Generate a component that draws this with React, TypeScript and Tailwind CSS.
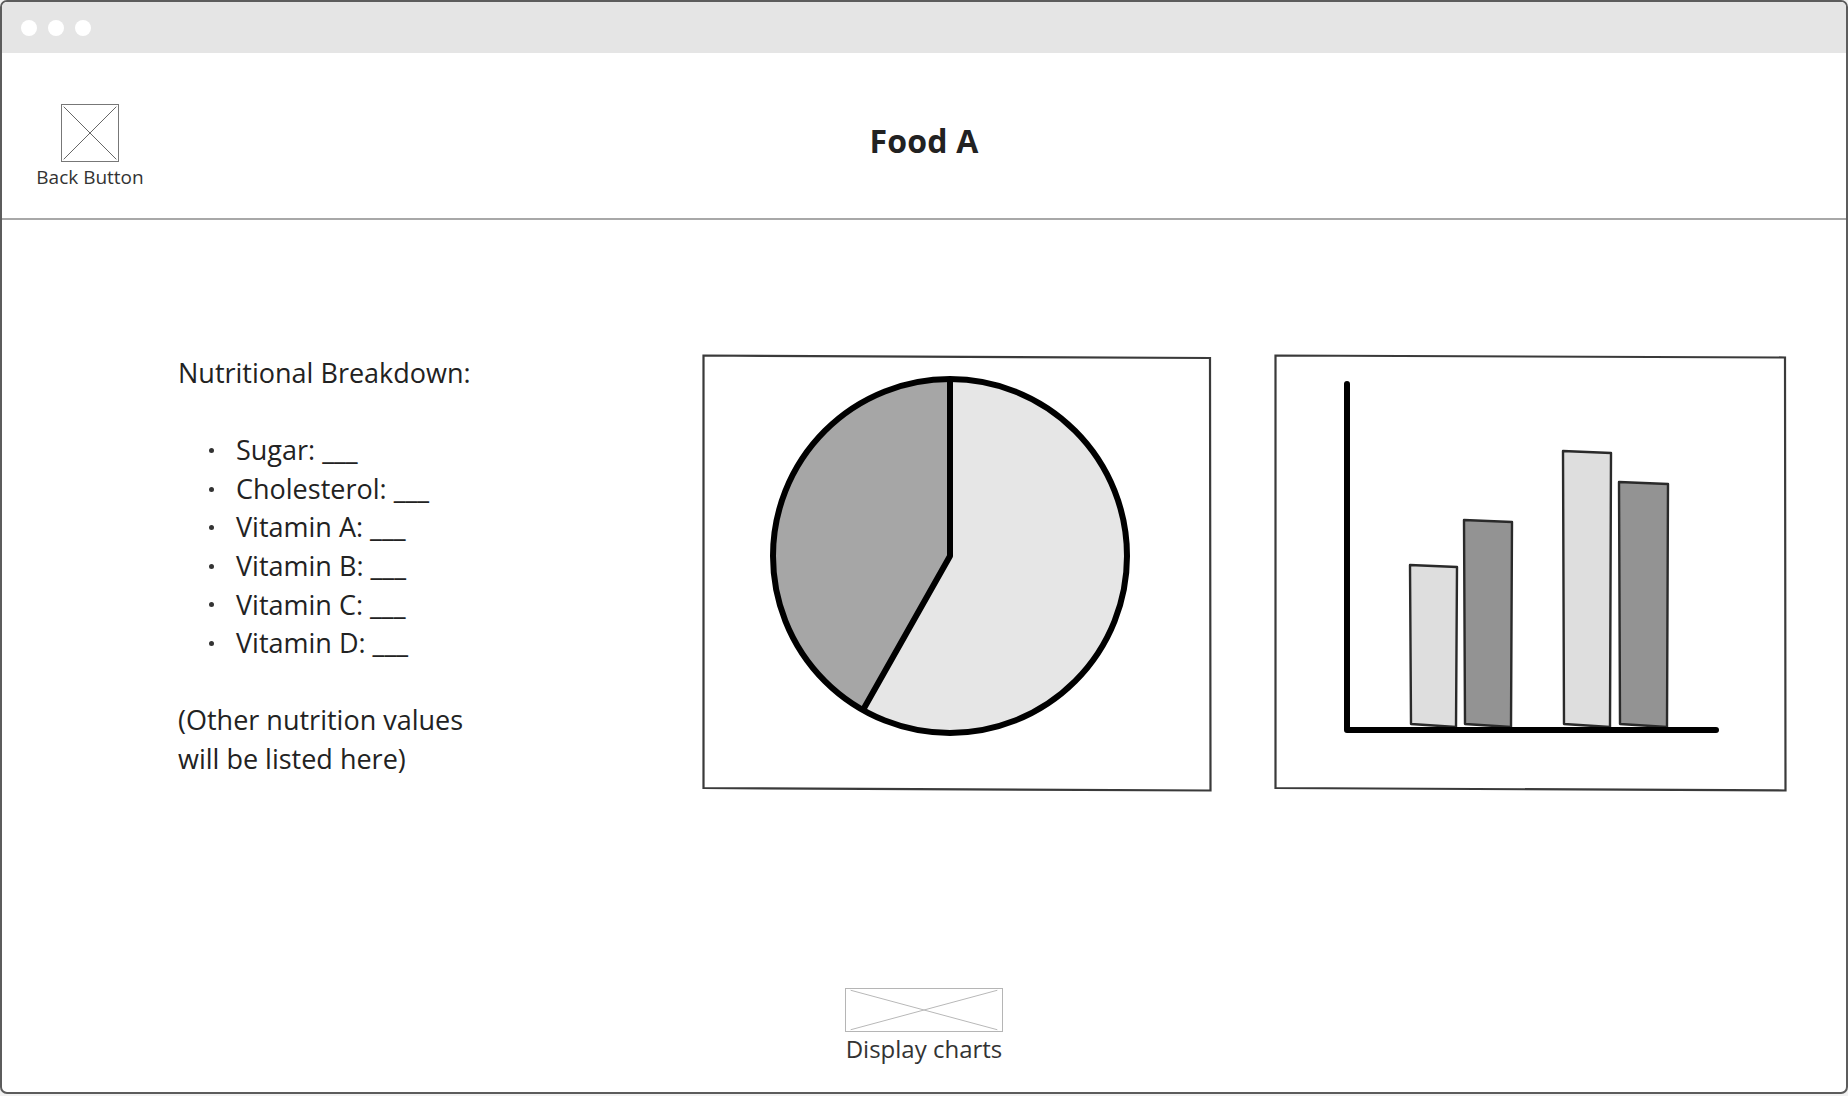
import React from "react";

const nutrients = ["Sugar", "Cholesterol", "Vitamin A", "Vitamin B", "Vitamin C", "Vitamin D"];

// placeholder image box with an X across it
function PlaceholderBox({ className, stroke }: { className: string; stroke: string }) {
  return (
    <div className={className}>
      <svg className="h-full w-full" viewBox="0 0 100 100" preserveAspectRatio="none">
        <line x1="3" y1="3" x2="97" y2="97" stroke={stroke} strokeWidth="1" vectorEffect="non-scaling-stroke" />
        <line x1="97" y1="3" x2="3" y2="97" stroke={stroke} strokeWidth="1" vectorEffect="non-scaling-stroke" />
      </svg>
    </div>
  );
}

function PieSketch() {
  return (
    <svg width="510" height="438" viewBox="0 0 510 438">
      {/* hand drawn frame */}
      <path d="M1.5 1.5 L508 4 L508.5 436.5 L1.5 434 Z" fill="#fff" stroke="#3a3a3a" strokeWidth="2.2" />
      <path d="M248 202 L248 25 A177 177 0 1 1 161 356 Z" fill="#e6e6e6" />
      <path d="M248 202 L248 25 A177 177 0 0 0 161 356 Z" fill="#a6a6a6" />
      <circle cx="248" cy="202" r="177" fill="none" stroke="#000" strokeWidth="6" />
      <path d="M248 25 L248 202 L161 356" fill="none" stroke="#000" strokeWidth="6" strokeLinejoin="round" />
    </svg>
  );
}

function BarSketch() {
  const bars = [
    { x1: 136, x2: 183, top: 211, fill: "#dedede" },
    { x1: 190, x2: 238, top: 166, fill: "#939393" },
    { x1: 289, x2: 337, top: 97, fill: "#dedede" },
    { x1: 345, x2: 394, top: 128, fill: "#939393" },
  ];
  return (
    <svg width="513" height="438" viewBox="0 0 513 438">
      <path d="M1.5 1.5 L511 3.5 L511.5 436.5 L1.5 434 Z" fill="#fff" stroke="#3a3a3a" strokeWidth="2.2" />
      {bars.map((b) => (
        <path
          key={b.x1}
          d={`M${b.x1} ${b.top} L${b.x2} ${b.top + 2} L${b.x2 - 1} 373 L${b.x1 + 1} 370 Z`}
          fill={b.fill}
          stroke="#2a2a2a"
          strokeWidth="2.4"
          strokeLinejoin="round"
        />
      ))}
      <path d="M73 30 L73 376 L442 376" fill="none" stroke="#000" strokeWidth="6" strokeLinecap="round" strokeLinejoin="round" />
    </svg>
  );
}

export default function App() {
  return (
    <div className="h-[1096px] w-full bg-[#f2f2f2] text-[#222]" style={{ fontFamily: '"Open Sans", "Liberation Sans", sans-serif' }}>
      <div className="flex h-[1094px] flex-col overflow-hidden rounded-[7px] border-2 border-[#5c5c5c] bg-white">
        {/* window chrome */}
        <div className="flex h-[51px] shrink-0 items-center gap-[11px] bg-[#e5e5e5] pl-[19px]">
          <span className="h-4 w-4 rounded-full bg-white" />
          <span className="h-4 w-4 rounded-full bg-white" />
          <span className="h-4 w-4 rounded-full bg-white" />
        </div>

        {/* header */}
        <header className="grid h-[167px] shrink-0 grid-cols-[1fr_auto_1fr] items-center border-b-2 border-[#a8a8a8]">
          <div className="flex flex-col items-start pl-[27px] pt-[22px]">
            <div className="flex w-[122px] flex-col items-center">
              <PlaceholderBox className="h-[58px] w-[58px] border border-[#777]" stroke="#666" />
              <span className="mt-[2px] text-[19px] leading-[26px] text-[#333]">Back Button</span>
            </div>
          </div>
          <h1 className="pt-[10px] text-[32px] font-bold leading-none tracking-[0.2px]">Food A</h1>
          <div />
        </header>

        {/* body */}
        <main className="flex flex-1 flex-col">
          <div className="flex items-start pl-[176px] pt-[134px]">
            <div className="w-[524px] text-[27px] leading-[38.6px]">
              <p>Nutritional Breakdown:</p>
              <p>&nbsp;</p>
              <ul>
                {nutrients.map((n) => (
                  <li key={n} className="flex items-center">
                    <span className="ml-[31px] mr-[22px] h-[5px] w-[5px] rounded-full bg-[#333]" />
                    <span>{n}: ___</span>
                  </li>
                ))}
              </ul>
              <p>&nbsp;</p>
              <p>(Other nutrition values</p>
              <p>will be listed here)</p>
            </div>
            <div className="flex gap-[62px]">
              <PieSketch />
              <BarSketch />
            </div>
          </div>

          <div className="mt-auto flex flex-col items-center pb-[27px]">
            <PlaceholderBox className="h-[44px] w-[158px] border border-[#b5b5b5]" stroke="#b8b8b8" />
            <span className="mt-[1px] text-[24px] leading-[32px] text-[#333]">Display charts</span>
          </div>
        </main>
      </div>
    </div>
  );
}
